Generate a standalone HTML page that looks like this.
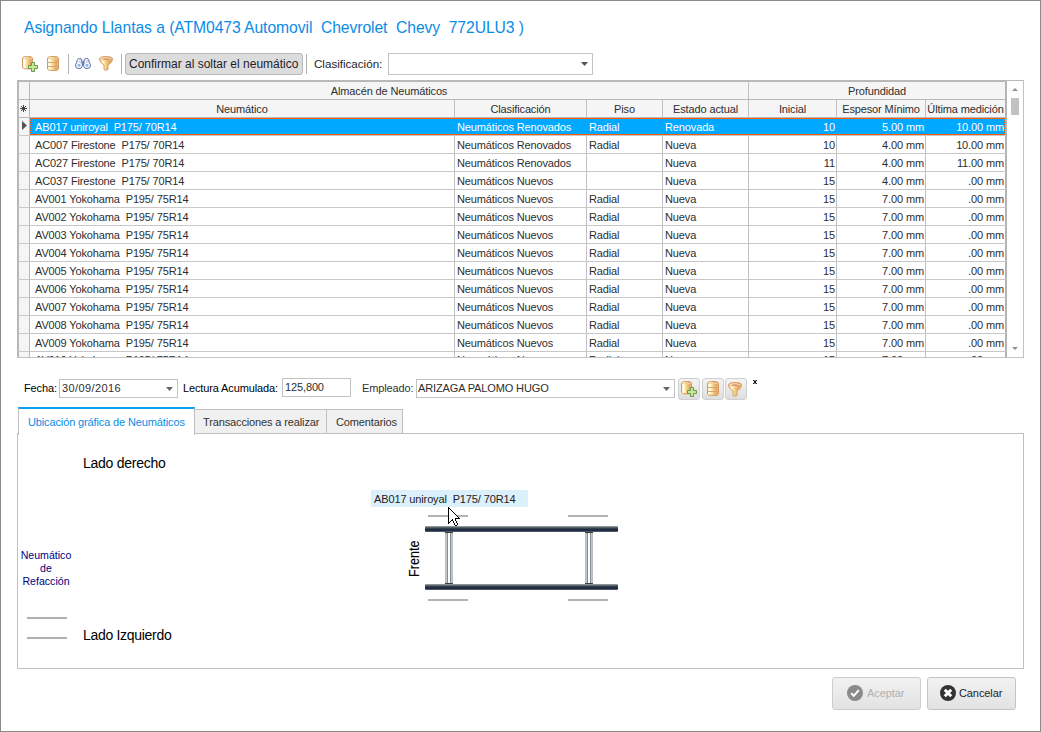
<!DOCTYPE html>
<html><head><meta charset="utf-8">
<style>
*{margin:0;padding:0;box-sizing:border-box}
html,body{width:1041px;height:732px;overflow:hidden;background:#fff}
body{position:relative;font-family:"Liberation Sans",sans-serif;color:#000}
.a{position:absolute}
.t{position:absolute;white-space:pre;line-height:1}
.g{font-size:11px;color:#2e2e2e;letter-spacing:-0.13px}
.sel{color:#fff}
</style></head><body>

<div class="a" style="left:0;top:0;width:1041px;height:732px;border:1px solid #8a8a8a"></div>
<div class="t" style="left:24px;top:20px;font-size:15.7px;letter-spacing:-0.07px;color:#0a8ce6">Asignando Llantas a (ATM0473 Automovil&nbsp; Chevrolet&nbsp; Chevy&nbsp; 772ULU3 )</div>
<svg class="a" style="left:22px;top:56px" width="17" height="17" viewBox="0 0 17 17">
<defs><linearGradient id="dpg1" x1="0" x2="1" y1="0" y2="0"><stop offset="0" stop-color="#fbe7c0"/><stop offset="0.2" stop-color="#fffdf4"/><stop offset="0.5" stop-color="#f6d67e"/><stop offset="0.8" stop-color="#e2a568"/><stop offset="1" stop-color="#edc08a"/></linearGradient></defs>
<path d="M0.5 2 Q0.5 0.5 5.5 0.5 Q10.5 0.5 10.5 2 L10.5 11.5 Q10.5 13 5.5 13 Q0.5 13 0.5 11.5 Z" fill="url(#dpg1)" stroke="#d39b62" stroke-width="1"/>
<path d="M1 2.2 Q5.5 3.6 10 2.2" fill="none" stroke="#f0d2a8" stroke-width="1"/>
<path d="M9.5 6.5 H12.5 V9.5 H15.5 V12.5 H12.5 V15.5 H9.5 V12.5 H6.5 V9.5 H9.5 Z" fill="#c4e89a" stroke="#6b9748" stroke-width="1"/>
</svg>
<svg class="a" style="left:47px;top:56px" width="13" height="15" viewBox="0 0 13 15">
<defs><linearGradient id="dbg2" x1="0" x2="1" y1="0" y2="0"><stop offset="0" stop-color="#fbe7c0"/><stop offset="0.2" stop-color="#fffdf4"/><stop offset="0.5" stop-color="#f6d67e"/><stop offset="0.8" stop-color="#e2a568"/><stop offset="1" stop-color="#edc08a"/></linearGradient></defs>
<path d="M0.5 2 Q0.5 0.5 6 0.5 Q11.5 0.5 11.5 2 L11.5 13 Q11.5 14.5 6 14.5 Q0.5 14.5 0.5 13 Z" fill="url(#dbg2)" stroke="#d39b62" stroke-width="1"/>
<path d="M1 2.2 Q6 3.6 11 2.2" fill="none" stroke="#f0d2a8" stroke-width="1"/>
<path d="M1 6.5 H11" stroke="#d8a472" stroke-width="1"/>
<path d="M1 10.5 H11" stroke="#d8a472" stroke-width="1"/>
</svg>
<div class="a" style="left:68px;top:54px;width:1px;height:20px;background:#b4b4b4"></div>
<svg class="a" style="left:75px;top:58px" width="16" height="11" viewBox="0 0 16 12" preserveAspectRatio="none">
<path d="M2.5 1.5 Q3 0.5 4.5 0.5 Q6.5 0.5 6.8 2 L7.3 6 L7.3 9 Q6.8 11.5 4 11.5 Q0.5 11.5 0.5 8.5 Q0.5 6.5 1.5 5 Z" fill="#d3dbeb" stroke="#5c6fa3" stroke-width="1"/>
<path d="M13.5 1.5 Q13 0.5 11.5 0.5 Q9.5 0.5 9.2 2 L8.7 6 L8.7 9 Q9.2 11.5 12 11.5 Q15.5 11.5 15.5 8.5 Q15.5 6.5 14.5 5 Z" fill="#d3dbeb" stroke="#5c6fa3" stroke-width="1"/>
<rect x="6.8" y="3.5" width="2.4" height="4.5" fill="#6f7fae"/>
<path d="M3.5 1.5 L3 5" stroke="#fff" stroke-width="1"/><path d="M11 1.5 L10.5 5" stroke="#fff" stroke-width="1"/>
<circle cx="4" cy="8" r="2.6" fill="#fff"/><circle cx="12" cy="8" r="2.6" fill="#fff"/>
<circle cx="4" cy="8" r="1.5" fill="#7fb2ec"/><circle cx="12" cy="8" r="1.5" fill="#7fb2ec"/>
</svg>
<svg class="a" style="left:99px;top:56px" width="15" height="15" viewBox="0 0 15 15">
<defs><linearGradient id="fg3" x1="0" x2="1"><stop offset="0" stop-color="#efc27e"/><stop offset="0.25" stop-color="#fff6dc"/><stop offset="0.5" stop-color="#f3cf78"/><stop offset="0.8" stop-color="#e3a566"/><stop offset="1" stop-color="#ebb77c"/></linearGradient></defs>
<path d="M0.5 3 Q0.5 0.5 7 0.5 Q13.5 0.5 13.5 3 Q13.5 6.5 9 9 L9 13.5 Q7 15 5 13.5 L5 9 Q0.5 6.5 0.5 3Z" fill="url(#fg3)" stroke="#d9a066" stroke-width="1"/>
<ellipse cx="7" cy="2.6" rx="5" ry="1.3" fill="#d8916a"/>
<path d="M2 2.6 Q7 0.8 12 2.6" fill="none" stroke="#fff3dc" stroke-width="0.8"/>
</svg>
<div class="a" style="left:121px;top:54px;width:1px;height:20px;background:#b4b4b4"></div>
<div class="a" style="left:125px;top:53px;width:178px;height:22px;background:#dcdcdc;border:1px solid #b8b8b8;border-radius:3px"></div>
<div class="t" style="left:129px;top:58px;font-size:12px;color:#1e1e2a">Confirmar al soltar el neumático</div>
<div class="a" style="left:306px;top:54px;width:1px;height:20px;background:#b4b4b4"></div>
<div class="t" style="left:314px;top:58px;font-size:11.6px;color:#1e1e2a">Clasificación:</div>
<div class="a" style="left:388px;top:53px;width:205px;height:22px;border:1px solid #c3c3c3;background:#fff"></div>
<svg class="a" style="left:581px;top:62px" width="7" height="4"><path d="M0 0H7L3.5 4Z" fill="#555"/></svg>
<div class="a" style="left:17px;top:80px;width:1007px;height:278px;border:1px solid #c2c2c2;border-top-color:#b8b8b8;border-left-color:#b8b8b8;background:#fff"></div>
<div class="a" style="left:18px;top:81px;width:988px;height:37px;background:#f5f5f5"></div>
<div class="a" style="left:18px;top:81px;width:11px;height:276px;background:#f5f5f5"></div>
<div class="a" style="left:17px;top:81px;width:990px;height:1px;background:#b8b8b8"></div>
<div class="a" style="left:18px;top:81px;width:1px;height:276px;background:#b8b8b8"></div>
<div class="a" style="left:18px;top:99px;width:988px;height:1px;background:#b9b9b9"></div>
<div class="a" style="left:18px;top:117px;width:988px;height:1px;background:#b9b9b9"></div>
<div class="a" style="left:29px;top:81px;width:1px;height:276px;background:#b9b9b9"></div>
<div class="a" style="left:454px;top:100px;width:1px;height:257px;background:#c0c0c0"></div>
<div class="a" style="left:586px;top:100px;width:1px;height:257px;background:#c0c0c0"></div>
<div class="a" style="left:662px;top:100px;width:1px;height:257px;background:#c0c0c0"></div>
<div class="a" style="left:748px;top:81px;width:1px;height:276px;background:#c0c0c0"></div>
<div class="a" style="left:836px;top:100px;width:1px;height:257px;background:#c0c0c0"></div>
<div class="a" style="left:925px;top:100px;width:1px;height:257px;background:#c0c0c0"></div>
<div class="a" style="left:1005px;top:81px;width:2px;height:276px;background:#b4b4b4"></div>
<div class="a" style="left:18px;top:135px;width:988px;height:1px;background:#c8c8c8"></div>
<div class="a" style="left:18px;top:153px;width:988px;height:1px;background:#c8c8c8"></div>
<div class="a" style="left:18px;top:171px;width:988px;height:1px;background:#c8c8c8"></div>
<div class="a" style="left:18px;top:189px;width:988px;height:1px;background:#c8c8c8"></div>
<div class="a" style="left:18px;top:207px;width:988px;height:1px;background:#c8c8c8"></div>
<div class="a" style="left:18px;top:225px;width:988px;height:1px;background:#c8c8c8"></div>
<div class="a" style="left:18px;top:243px;width:988px;height:1px;background:#c8c8c8"></div>
<div class="a" style="left:18px;top:261px;width:988px;height:1px;background:#c8c8c8"></div>
<div class="a" style="left:18px;top:279px;width:988px;height:1px;background:#c8c8c8"></div>
<div class="a" style="left:18px;top:297px;width:988px;height:1px;background:#c8c8c8"></div>
<div class="a" style="left:18px;top:315px;width:988px;height:1px;background:#c8c8c8"></div>
<div class="a" style="left:18px;top:333px;width:988px;height:1px;background:#c8c8c8"></div>
<div class="a" style="left:18px;top:351px;width:988px;height:1px;background:#c8c8c8"></div>
<div class="t g" style="left:30px;top:86px;width:718px;text-align:center;">Almacén de Neumáticos</div>
<div class="t g" style="left:749px;top:86px;width:256px;text-align:center;">Profundidad</div>
<div class="t g" style="left:30px;top:104px;width:424px;text-align:center;">Neumático</div>
<div class="t g" style="left:455px;top:104px;width:131px;text-align:center;">Clasificación</div>
<div class="t g" style="left:587px;top:104px;width:75px;text-align:center;">Piso</div>
<div class="t g" style="left:663px;top:104px;width:85px;text-align:center;">Estado actual</div>
<div class="t g" style="left:749px;top:104px;width:87px;text-align:center;">Inicial</div>
<div class="t g" style="left:837px;top:104px;width:88px;text-align:center;">Espesor Mínimo</div>
<div class="t g" style="left:926px;top:104px;width:79px;text-align:center;">Última medición</div>
<svg class="a" style="left:20px;top:105px" width="7" height="7" viewBox="0 0 7 7"><path d="M3.5 0V7M0 3.5H7M1 1L6 6M6 1L1 6" stroke="#444" stroke-width="1"/></svg>
<svg class="a" style="left:22px;top:121px" width="5" height="9"><path d="M0 0L5 4.5L0 9Z" fill="#555"/></svg>
<div class="a" style="left:30px;top:118px;width:975px;height:17px;background:#00a8ff;border:1px dotted #ff5a00"></div>
<div class="t g sel" style="left:35px;top:122px">AB017 uniroyal  P175/ 70R14</div>
<div class="t g sel" style="left:457px;top:122px">Neumáticos Renovados</div>
<div class="t g sel" style="left:589px;top:122px">Radial</div>
<div class="t g sel" style="left:665px;top:122px">Renovada</div>
<div class="t g sel" style="right:206px;top:122px">10</div>
<div class="t g sel" style="right:117px;top:122px">5.00 mm</div>
<div class="t g sel" style="right:37px;top:122px">10.00 mm</div>
<div class="t g" style="left:35px;top:140px">AC007 Firestone  P175/ 70R14</div>
<div class="t g" style="left:457px;top:140px">Neumáticos Renovados</div>
<div class="t g" style="left:589px;top:140px">Radial</div>
<div class="t g" style="left:665px;top:140px">Nueva</div>
<div class="t g" style="right:206px;top:140px">10</div>
<div class="t g" style="right:117px;top:140px">4.00 mm</div>
<div class="t g" style="right:37px;top:140px">10.00 mm</div>
<div class="t g" style="left:35px;top:158px">AC027 Firestone  P175/ 70R14</div>
<div class="t g" style="left:457px;top:158px">Neumáticos Renovados</div>
<div class="t g" style="left:665px;top:158px">Nueva</div>
<div class="t g" style="right:206px;top:158px">11</div>
<div class="t g" style="right:117px;top:158px">4.00 mm</div>
<div class="t g" style="right:37px;top:158px">11.00 mm</div>
<div class="t g" style="left:35px;top:176px">AC037 Firestone  P175/ 70R14</div>
<div class="t g" style="left:457px;top:176px">Neumáticos Nuevos</div>
<div class="t g" style="left:665px;top:176px">Nueva</div>
<div class="t g" style="right:206px;top:176px">15</div>
<div class="t g" style="right:117px;top:176px">4.00 mm</div>
<div class="t g" style="right:37px;top:176px">.00 mm</div>
<div class="t g" style="left:35px;top:194px">AV001 Yokohama  P195/ 75R14</div>
<div class="t g" style="left:457px;top:194px">Neumáticos Nuevos</div>
<div class="t g" style="left:589px;top:194px">Radial</div>
<div class="t g" style="left:665px;top:194px">Nueva</div>
<div class="t g" style="right:206px;top:194px">15</div>
<div class="t g" style="right:117px;top:194px">7.00 mm</div>
<div class="t g" style="right:37px;top:194px">.00 mm</div>
<div class="t g" style="left:35px;top:212px">AV002 Yokohama  P195/ 75R14</div>
<div class="t g" style="left:457px;top:212px">Neumáticos Nuevos</div>
<div class="t g" style="left:589px;top:212px">Radial</div>
<div class="t g" style="left:665px;top:212px">Nueva</div>
<div class="t g" style="right:206px;top:212px">15</div>
<div class="t g" style="right:117px;top:212px">7.00 mm</div>
<div class="t g" style="right:37px;top:212px">.00 mm</div>
<div class="t g" style="left:35px;top:230px">AV003 Yokohama  P195/ 75R14</div>
<div class="t g" style="left:457px;top:230px">Neumáticos Nuevos</div>
<div class="t g" style="left:589px;top:230px">Radial</div>
<div class="t g" style="left:665px;top:230px">Nueva</div>
<div class="t g" style="right:206px;top:230px">15</div>
<div class="t g" style="right:117px;top:230px">7.00 mm</div>
<div class="t g" style="right:37px;top:230px">.00 mm</div>
<div class="t g" style="left:35px;top:248px">AV004 Yokohama  P195/ 75R14</div>
<div class="t g" style="left:457px;top:248px">Neumáticos Nuevos</div>
<div class="t g" style="left:589px;top:248px">Radial</div>
<div class="t g" style="left:665px;top:248px">Nueva</div>
<div class="t g" style="right:206px;top:248px">15</div>
<div class="t g" style="right:117px;top:248px">7.00 mm</div>
<div class="t g" style="right:37px;top:248px">.00 mm</div>
<div class="t g" style="left:35px;top:266px">AV005 Yokohama  P195/ 75R14</div>
<div class="t g" style="left:457px;top:266px">Neumáticos Nuevos</div>
<div class="t g" style="left:589px;top:266px">Radial</div>
<div class="t g" style="left:665px;top:266px">Nueva</div>
<div class="t g" style="right:206px;top:266px">15</div>
<div class="t g" style="right:117px;top:266px">7.00 mm</div>
<div class="t g" style="right:37px;top:266px">.00 mm</div>
<div class="t g" style="left:35px;top:284px">AV006 Yokohama  P195/ 75R14</div>
<div class="t g" style="left:457px;top:284px">Neumáticos Nuevos</div>
<div class="t g" style="left:589px;top:284px">Radial</div>
<div class="t g" style="left:665px;top:284px">Nueva</div>
<div class="t g" style="right:206px;top:284px">15</div>
<div class="t g" style="right:117px;top:284px">7.00 mm</div>
<div class="t g" style="right:37px;top:284px">.00 mm</div>
<div class="t g" style="left:35px;top:302px">AV007 Yokohama  P195/ 75R14</div>
<div class="t g" style="left:457px;top:302px">Neumáticos Nuevos</div>
<div class="t g" style="left:589px;top:302px">Radial</div>
<div class="t g" style="left:665px;top:302px">Nueva</div>
<div class="t g" style="right:206px;top:302px">15</div>
<div class="t g" style="right:117px;top:302px">7.00 mm</div>
<div class="t g" style="right:37px;top:302px">.00 mm</div>
<div class="t g" style="left:35px;top:320px">AV008 Yokohama  P195/ 75R14</div>
<div class="t g" style="left:457px;top:320px">Neumáticos Nuevos</div>
<div class="t g" style="left:589px;top:320px">Radial</div>
<div class="t g" style="left:665px;top:320px">Nueva</div>
<div class="t g" style="right:206px;top:320px">15</div>
<div class="t g" style="right:117px;top:320px">7.00 mm</div>
<div class="t g" style="right:37px;top:320px">.00 mm</div>
<div class="t g" style="left:35px;top:338px">AV009 Yokohama  P195/ 75R14</div>
<div class="t g" style="left:457px;top:338px">Neumáticos Nuevos</div>
<div class="t g" style="left:589px;top:338px">Radial</div>
<div class="t g" style="left:665px;top:338px">Nueva</div>
<div class="t g" style="right:206px;top:338px">15</div>
<div class="t g" style="right:117px;top:338px">7.00 mm</div>
<div class="t g" style="right:37px;top:338px">.00 mm</div>
<div class="a" style="left:30px;top:352px;width:975px;height:5px;overflow:hidden">
<div class="t g" style="left:5px;top:3px">AV010 Yokohama  P195/ 75R14</div>
<div class="t g" style="left:427px;top:3px">Neumáticos Nuevos</div>
<div class="t g" style="left:559px;top:3px">Radial</div>
<div class="t g" style="left:635px;top:3px">Nueva</div>
<div class="t g" style="right:170px;top:3px">15</div>
<div class="t g" style="right:81px;top:3px">7.00 mm</div>
<div class="t g" style="right:1px;top:3px">.00 mm</div>
</div>
<svg class="a" style="left:1012px;top:88px" width="6" height="3"><path d="M0 3H6L3 0Z" fill="#909090"/></svg>
<div class="a" style="left:1011px;top:98px;width:8px;height:17px;background:#c2c2c2"></div>
<svg class="a" style="left:1012px;top:347px" width="6" height="3"><path d="M0 0H6L3 3Z" fill="#909090"/></svg>
<div class="t g" style="left:24px;top:383px;color:#000">Fecha:</div>
<div class="a" style="left:59px;top:379px;width:119px;height:19px;border:1px solid #c3c3c3"></div>
<div class="t g" style="left:62px;top:383px;letter-spacing:0.4px">30/09/2016</div>
<svg class="a" style="left:166px;top:387px" width="7" height="4"><path d="M0 0H7L3.5 4Z" fill="#666"/></svg>
<div class="t g" style="left:183px;top:383px;color:#000">Lectura Acumulada:</div>
<div class="a" style="left:282px;top:378px;width:69px;height:19px;border:1px solid #c3c3c3"></div>
<div class="t g" style="left:285px;top:382px">125,800</div>
<div class="t g" style="left:362px;top:383px;color:#333">Empleado:</div>
<div class="a" style="left:416px;top:379px;width:259px;height:19px;border:1px solid #c3c3c3"></div>
<div class="t g" style="left:418px;top:383px">ARIZAGA PALOMO HUGO</div>
<svg class="a" style="left:663px;top:387px" width="7" height="4"><path d="M0 0H7L3.5 4Z" fill="#666"/></svg>
<div class="a" style="left:678px;top:378px;width:22px;height:22px;border:1px solid #cfcfcf;border-radius:3px;background:linear-gradient(#f4f4f4,#dedede)"></div>
<div class="a" style="left:702px;top:378px;width:22px;height:22px;border:1px solid #cfcfcf;border-radius:3px;background:linear-gradient(#f4f4f4,#dedede)"></div>
<div class="a" style="left:725px;top:378px;width:22px;height:22px;border:1px solid #cfcfcf;border-radius:3px;background:linear-gradient(#f4f4f4,#dedede)"></div>
<svg class="a" style="left:681px;top:381px" width="17" height="17" viewBox="0 0 17 17">
<defs><linearGradient id="dpg4" x1="0" x2="1" y1="0" y2="0"><stop offset="0" stop-color="#fbe7c0"/><stop offset="0.2" stop-color="#fffdf4"/><stop offset="0.5" stop-color="#f6d67e"/><stop offset="0.8" stop-color="#e2a568"/><stop offset="1" stop-color="#edc08a"/></linearGradient></defs>
<path d="M0.5 2 Q0.5 0.5 5.5 0.5 Q10.5 0.5 10.5 2 L10.5 11.5 Q10.5 13 5.5 13 Q0.5 13 0.5 11.5 Z" fill="url(#dpg4)" stroke="#d39b62" stroke-width="1"/>
<path d="M1 2.2 Q5.5 3.6 10 2.2" fill="none" stroke="#f0d2a8" stroke-width="1"/>
<path d="M9.5 6.5 H12.5 V9.5 H15.5 V12.5 H12.5 V15.5 H9.5 V12.5 H6.5 V9.5 H9.5 Z" fill="#c4e89a" stroke="#6b9748" stroke-width="1"/>
</svg>
<svg class="a" style="left:707px;top:381px" width="13" height="15" viewBox="0 0 13 15">
<defs><linearGradient id="dbg5" x1="0" x2="1" y1="0" y2="0"><stop offset="0" stop-color="#fbe7c0"/><stop offset="0.2" stop-color="#fffdf4"/><stop offset="0.5" stop-color="#f6d67e"/><stop offset="0.8" stop-color="#e2a568"/><stop offset="1" stop-color="#edc08a"/></linearGradient></defs>
<path d="M0.5 2 Q0.5 0.5 6 0.5 Q11.5 0.5 11.5 2 L11.5 13 Q11.5 14.5 6 14.5 Q0.5 14.5 0.5 13 Z" fill="url(#dbg5)" stroke="#d39b62" stroke-width="1"/>
<path d="M1 2.2 Q6 3.6 11 2.2" fill="none" stroke="#f0d2a8" stroke-width="1"/>
<path d="M1 6.5 H11" stroke="#d8a472" stroke-width="1"/>
<path d="M1 10.5 H11" stroke="#d8a472" stroke-width="1"/>
</svg>
<svg class="a" style="left:728px;top:382px" width="15" height="15" viewBox="0 0 15 15">
<defs><linearGradient id="fg6" x1="0" x2="1"><stop offset="0" stop-color="#efc27e"/><stop offset="0.25" stop-color="#fff6dc"/><stop offset="0.5" stop-color="#f3cf78"/><stop offset="0.8" stop-color="#e3a566"/><stop offset="1" stop-color="#ebb77c"/></linearGradient></defs>
<path d="M0.5 3 Q0.5 0.5 7 0.5 Q13.5 0.5 13.5 3 Q13.5 6.5 9 9 L9 13.5 Q7 15 5 13.5 L5 9 Q0.5 6.5 0.5 3Z" fill="url(#fg6)" stroke="#d9a066" stroke-width="1"/>
<ellipse cx="7" cy="2.6" rx="5" ry="1.3" fill="#d8916a"/>
<path d="M2 2.6 Q7 0.8 12 2.6" fill="none" stroke="#fff3dc" stroke-width="0.8"/>
</svg>
<svg class="a" style="left:753px;top:380px" width="4" height="4" viewBox="0 0 4 4"><path d="M0 0L4 4M4 0L0 4M2 0V4" stroke="#000" stroke-width="0.9"/></svg>
<div class="a" style="left:17px;top:433px;width:1007px;height:236px;border:1px solid #c0c0c0;background:#fff"></div>
<div class="a" style="left:194px;top:409px;width:133px;height:25px;border:1px solid #c0c0c0;background:#f0f0f0"></div>
<div class="a" style="left:326px;top:409px;width:77px;height:25px;border:1px solid #c0c0c0;background:#f0f0f0"></div>
<div class="a" style="left:18px;top:407px;width:177px;height:28px;border-left:1px solid #c0c0c0;border-right:1px solid #c0c0c0;background:#fff;border-top:2px solid #0a9ef0"></div>
<div class="t g" style="left:28px;top:417px;color:#0a8ce6">Ubicación gráfica de Neumáticos</div>
<div class="t g" style="left:203px;top:417px;color:#333">Transacciones a realizar</div>
<div class="t g" style="left:336px;top:417px;color:#333">Comentarios</div>
<div class="t" style="left:83px;top:456px;font-size:14px;letter-spacing:-0.25px;color:#000">Lado derecho</div>
<div class="t" style="left:83px;top:628px;font-size:14px;letter-spacing:-0.3px;color:#000">Lado Izquierdo</div>
<div class="t" style="left:17px;top:549px;width:58px;text-align:center;font-size:10.6px;line-height:13px;color:#000080">Neumático<br>de<br>Refacción</div>
<div class="a" style="left:27px;top:617px;width:40px;height:2px;background:#b0b0b0"></div>
<div class="a" style="left:27px;top:637px;width:40px;height:2px;background:#b0b0b0"></div>
<div class="a" style="left:371px;top:490px;width:157px;height:17px;background:#dcf0fc"></div>
<div class="t g" style="left:374px;top:494px;color:#222">AB017 uniroyal&nbsp; P175/ 70R14</div>
<div class="a" style="left:428px;top:515px;width:40px;height:2px;background:#b4b4b4"></div>
<div class="a" style="left:568px;top:515px;width:40px;height:2px;background:#b4b4b4"></div>
<div class="a" style="left:428px;top:599px;width:40px;height:2px;background:#b4b4b4"></div>
<div class="a" style="left:568px;top:599px;width:40px;height:2px;background:#b4b4b4"></div>
<div class="a" style="left:425px;top:526px;width:193px;height:6px;border-radius:1px;background:linear-gradient(#a9b0b0,#46545a 30%,#1e2a3c 60%,#22304a 80%,#69707a)"></div>
<div class="a" style="left:425px;top:584px;width:193px;height:6px;border-radius:1px;background:linear-gradient(#a9b0b0,#46545a 30%,#1e2a3c 60%,#22304a 80%,#69707a)"></div>
<div class="a" style="left:445px;top:532px;width:8px;height:52px;border-top:1px solid #3a3f45;border-bottom:1px solid #3a3f45;background:linear-gradient(90deg,#b4b9c1 0,#c6cad1 2px,#868c95 2px,#868c95 3px,#fff 3px,#fff 5px,#868c95 5px,#868c95 6px,#c6cad1 6px,#b4b9c1 8px)"></div>
<div class="a" style="left:585px;top:532px;width:8px;height:52px;border-top:1px solid #3a3f45;border-bottom:1px solid #3a3f45;background:linear-gradient(90deg,#b4b9c1 0,#c6cad1 2px,#868c95 2px,#868c95 3px,#fff 3px,#fff 5px,#868c95 5px,#868c95 6px,#c6cad1 6px,#b4b9c1 8px)"></div>
<div class="t" style="left:406px;top:577px;font-size:15px;-webkit-text-stroke:0.15px #000;color:#000;transform:rotate(-90deg) scaleX(0.84);transform-origin:0 0">Frente</div>
<svg class="a" style="left:448px;top:507px" width="12" height="19" shape-rendering="crispEdges"><rect x="0" y="0" width="1" height="1" fill="#000"/><rect x="0" y="1" width="1" height="1" fill="#000"/><rect x="1" y="1" width="1" height="1" fill="#000"/><rect x="0" y="2" width="1" height="1" fill="#000"/><rect x="1" y="2" width="1" height="1" fill="#fff"/><rect x="2" y="2" width="1" height="1" fill="#000"/><rect x="0" y="3" width="1" height="1" fill="#000"/><rect x="1" y="3" width="1" height="1" fill="#fff"/><rect x="2" y="3" width="1" height="1" fill="#fff"/><rect x="3" y="3" width="1" height="1" fill="#000"/><rect x="0" y="4" width="1" height="1" fill="#000"/><rect x="1" y="4" width="1" height="1" fill="#fff"/><rect x="2" y="4" width="1" height="1" fill="#fff"/><rect x="3" y="4" width="1" height="1" fill="#fff"/><rect x="4" y="4" width="1" height="1" fill="#000"/><rect x="0" y="5" width="1" height="1" fill="#000"/><rect x="1" y="5" width="1" height="1" fill="#fff"/><rect x="2" y="5" width="1" height="1" fill="#fff"/><rect x="3" y="5" width="1" height="1" fill="#fff"/><rect x="4" y="5" width="1" height="1" fill="#fff"/><rect x="5" y="5" width="1" height="1" fill="#000"/><rect x="0" y="6" width="1" height="1" fill="#000"/><rect x="1" y="6" width="1" height="1" fill="#fff"/><rect x="2" y="6" width="1" height="1" fill="#fff"/><rect x="3" y="6" width="1" height="1" fill="#fff"/><rect x="4" y="6" width="1" height="1" fill="#fff"/><rect x="5" y="6" width="1" height="1" fill="#fff"/><rect x="6" y="6" width="1" height="1" fill="#000"/><rect x="0" y="7" width="1" height="1" fill="#000"/><rect x="1" y="7" width="1" height="1" fill="#fff"/><rect x="2" y="7" width="1" height="1" fill="#fff"/><rect x="3" y="7" width="1" height="1" fill="#fff"/><rect x="4" y="7" width="1" height="1" fill="#fff"/><rect x="5" y="7" width="1" height="1" fill="#fff"/><rect x="6" y="7" width="1" height="1" fill="#fff"/><rect x="7" y="7" width="1" height="1" fill="#000"/><rect x="0" y="8" width="1" height="1" fill="#000"/><rect x="1" y="8" width="1" height="1" fill="#fff"/><rect x="2" y="8" width="1" height="1" fill="#fff"/><rect x="3" y="8" width="1" height="1" fill="#fff"/><rect x="4" y="8" width="1" height="1" fill="#fff"/><rect x="5" y="8" width="1" height="1" fill="#fff"/><rect x="6" y="8" width="1" height="1" fill="#fff"/><rect x="7" y="8" width="1" height="1" fill="#fff"/><rect x="8" y="8" width="1" height="1" fill="#000"/><rect x="0" y="9" width="1" height="1" fill="#000"/><rect x="1" y="9" width="1" height="1" fill="#fff"/><rect x="2" y="9" width="1" height="1" fill="#fff"/><rect x="3" y="9" width="1" height="1" fill="#fff"/><rect x="4" y="9" width="1" height="1" fill="#fff"/><rect x="5" y="9" width="1" height="1" fill="#fff"/><rect x="6" y="9" width="1" height="1" fill="#fff"/><rect x="7" y="9" width="1" height="1" fill="#fff"/><rect x="8" y="9" width="1" height="1" fill="#fff"/><rect x="9" y="9" width="1" height="1" fill="#000"/><rect x="0" y="10" width="1" height="1" fill="#000"/><rect x="1" y="10" width="1" height="1" fill="#fff"/><rect x="2" y="10" width="1" height="1" fill="#fff"/><rect x="3" y="10" width="1" height="1" fill="#fff"/><rect x="4" y="10" width="1" height="1" fill="#fff"/><rect x="5" y="10" width="1" height="1" fill="#fff"/><rect x="6" y="10" width="1" height="1" fill="#fff"/><rect x="7" y="10" width="1" height="1" fill="#fff"/><rect x="8" y="10" width="1" height="1" fill="#fff"/><rect x="9" y="10" width="1" height="1" fill="#fff"/><rect x="10" y="10" width="1" height="1" fill="#000"/><rect x="0" y="11" width="1" height="1" fill="#000"/><rect x="1" y="11" width="1" height="1" fill="#fff"/><rect x="2" y="11" width="1" height="1" fill="#fff"/><rect x="3" y="11" width="1" height="1" fill="#fff"/><rect x="4" y="11" width="1" height="1" fill="#fff"/><rect x="5" y="11" width="1" height="1" fill="#fff"/><rect x="6" y="11" width="1" height="1" fill="#fff"/><rect x="7" y="11" width="1" height="1" fill="#000"/><rect x="8" y="11" width="1" height="1" fill="#000"/><rect x="9" y="11" width="1" height="1" fill="#000"/><rect x="10" y="11" width="1" height="1" fill="#000"/><rect x="11" y="11" width="1" height="1" fill="#000"/><rect x="0" y="12" width="1" height="1" fill="#000"/><rect x="1" y="12" width="1" height="1" fill="#fff"/><rect x="2" y="12" width="1" height="1" fill="#fff"/><rect x="3" y="12" width="1" height="1" fill="#fff"/><rect x="4" y="12" width="1" height="1" fill="#000"/><rect x="5" y="12" width="1" height="1" fill="#fff"/><rect x="6" y="12" width="1" height="1" fill="#fff"/><rect x="7" y="12" width="1" height="1" fill="#000"/><rect x="0" y="13" width="1" height="1" fill="#000"/><rect x="1" y="13" width="1" height="1" fill="#fff"/><rect x="2" y="13" width="1" height="1" fill="#fff"/><rect x="3" y="13" width="1" height="1" fill="#000"/><rect x="4" y="13" width="1" height="1" fill="#000"/><rect x="5" y="13" width="1" height="1" fill="#fff"/><rect x="6" y="13" width="1" height="1" fill="#fff"/><rect x="7" y="13" width="1" height="1" fill="#000"/><rect x="0" y="14" width="1" height="1" fill="#000"/><rect x="1" y="14" width="1" height="1" fill="#fff"/><rect x="2" y="14" width="1" height="1" fill="#000"/><rect x="5" y="14" width="1" height="1" fill="#000"/><rect x="6" y="14" width="1" height="1" fill="#fff"/><rect x="7" y="14" width="1" height="1" fill="#fff"/><rect x="8" y="14" width="1" height="1" fill="#000"/><rect x="0" y="15" width="1" height="1" fill="#000"/><rect x="1" y="15" width="1" height="1" fill="#000"/><rect x="5" y="15" width="1" height="1" fill="#000"/><rect x="6" y="15" width="1" height="1" fill="#fff"/><rect x="7" y="15" width="1" height="1" fill="#fff"/><rect x="8" y="15" width="1" height="1" fill="#000"/><rect x="0" y="16" width="1" height="1" fill="#000"/><rect x="6" y="16" width="1" height="1" fill="#000"/><rect x="7" y="16" width="1" height="1" fill="#fff"/><rect x="8" y="16" width="1" height="1" fill="#fff"/><rect x="9" y="16" width="1" height="1" fill="#000"/><rect x="6" y="17" width="1" height="1" fill="#000"/><rect x="7" y="17" width="1" height="1" fill="#fff"/><rect x="8" y="17" width="1" height="1" fill="#fff"/><rect x="9" y="17" width="1" height="1" fill="#000"/><rect x="7" y="18" width="1" height="1" fill="#000"/><rect x="8" y="18" width="1" height="1" fill="#000"/></svg>
<div class="a" style="left:832px;top:677px;width:89px;height:33px;border:1px solid #cdcdcd;border-radius:3px;background:linear-gradient(#f2f2f2,#e2e2e2)"></div>
<div class="a" style="left:927px;top:677px;width:89px;height:33px;border:1px solid #c4c4c4;border-radius:3px;background:linear-gradient(#f2f2f2,#e2e2e2)"></div>
<svg class="a" style="left:847px;top:685px" width="16" height="16" viewBox="0 0 16 16"><circle cx="8" cy="8" r="8" fill="#8a8a8a"/><path d="M4.2 8.2 L6.8 10.8 L11.8 5.2" fill="none" stroke="#fff" stroke-width="2"/></svg>
<div class="t" style="left:867px;top:688px;font-size:11px;letter-spacing:-0.1px;color:#b0b0b0">Aceptar</div>
<svg class="a" style="left:940px;top:685px" width="16" height="16" viewBox="0 0 16 16"><circle cx="8" cy="8" r="8" fill="#333"/><path d="M4.8 4.8 L11.2 11.2 M11.2 4.8 L4.8 11.2" fill="none" stroke="#fff" stroke-width="3"/></svg>
<div class="t" style="left:959px;top:688px;font-size:11px;letter-spacing:-0.1px;color:#1e1e2a">Cancelar</div>
</body></html>
